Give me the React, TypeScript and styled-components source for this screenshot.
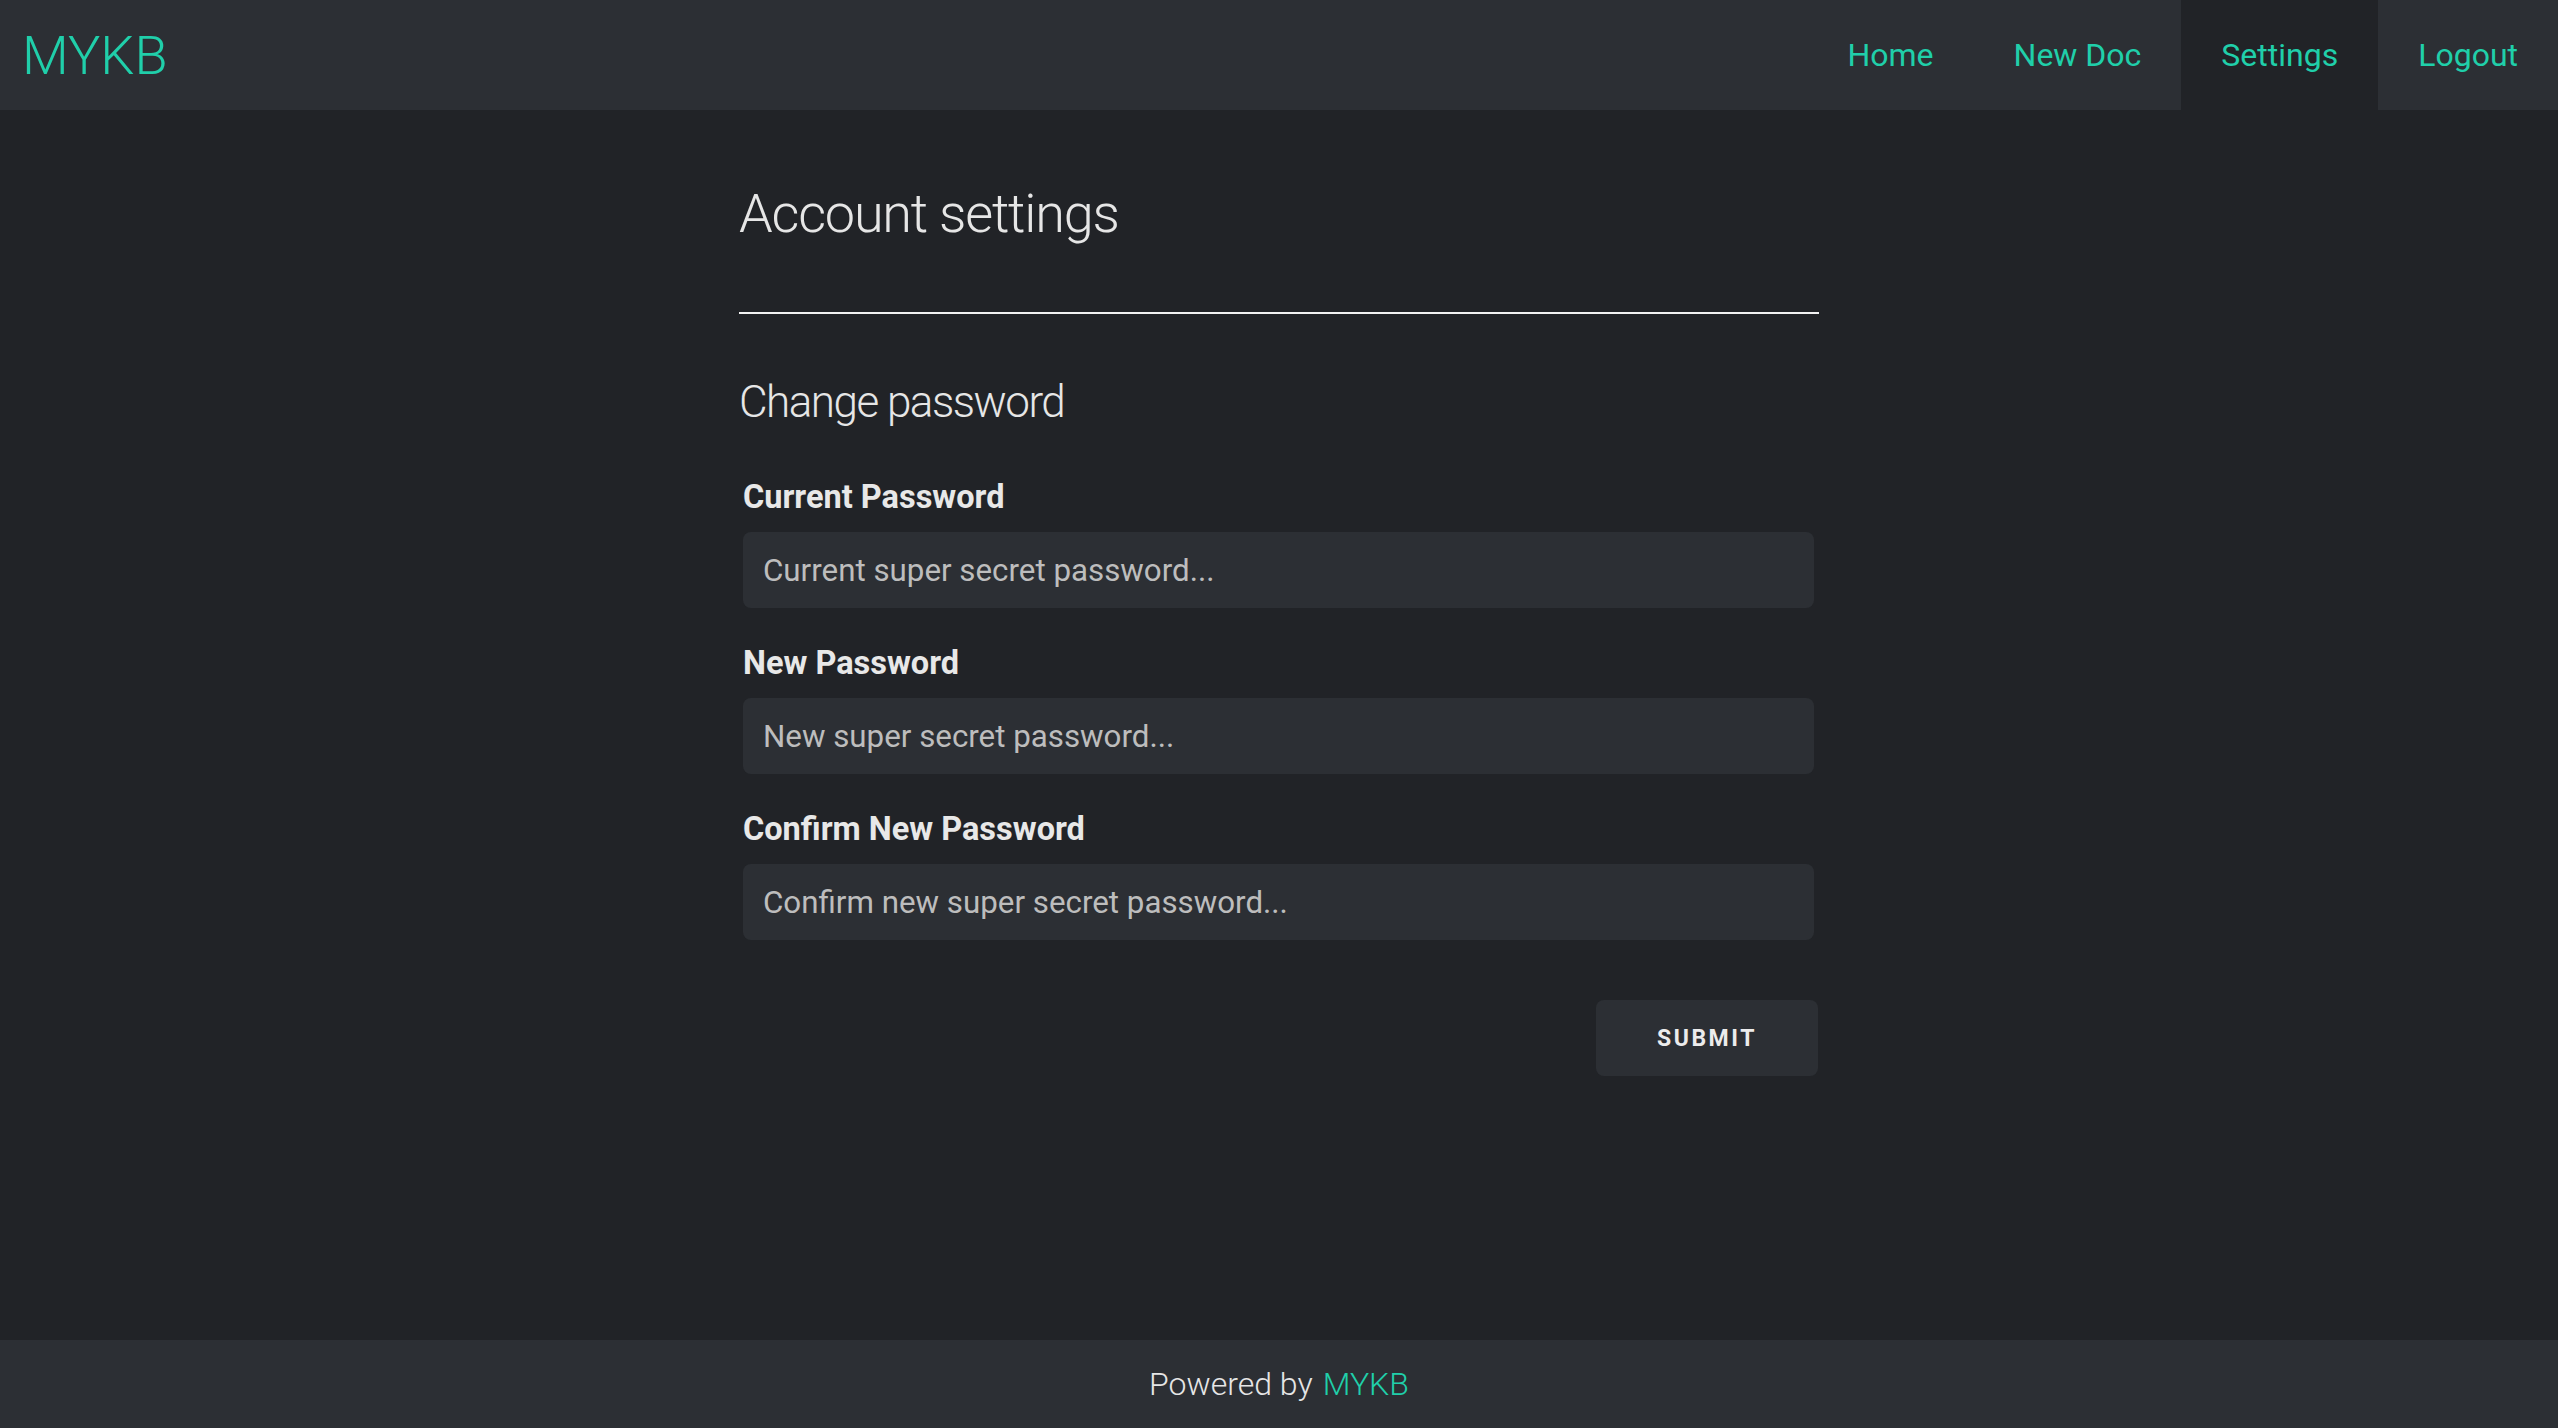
import React from "react";
import styled, { createGlobalStyle } from "styled-components";

const ACCENT = "#20cfaa";
const PANEL = "#2c2f34";
const PAGE = "#212327";
const TEXT = "#e6e6e6";

const GlobalStyle = createGlobalStyle`
  html, body {
    margin: 0;
    padding: 0;
    background: ${PAGE};
  }
  body {
    font-family: Roboto, "Noto Sans", "Liberation Sans", sans-serif;
    color: ${TEXT};
  }
  * {
    box-sizing: border-box;
  }
`;

const NAV_LINKS = [
  { label: "Home" },
  { label: "New Doc" },
  { label: "Settings", active: true },
  { label: "Logout" },
];

const FIELDS = [
  { id: "current", label: "Current Password", placeholder: "Current super secret password..." },
  { id: "new", label: "New Password", placeholder: "New super secret password..." },
  { id: "confirm", label: "Confirm New Password", placeholder: "Confirm new super secret password..." },
];

function App() {
  return (
    <>
      <GlobalStyle />
      <Page>
        <Header>
          <Logo href="#">MYKB</Logo>
          <Nav>
            {NAV_LINKS.map((link) => (
              <NavLink key={link.label} href="#" $active={link.active}>
                {link.label}
              </NavLink>
            ))}
          </Nav>
        </Header>

        <Main>
          <Column>
            <Title>Account settings</Title>
            <Divider />
            <SectionTitle>Change password</SectionTitle>
            <Form onSubmit={(e) => e.preventDefault()}>
              {FIELDS.map((field) => (
                <Field key={field.id}>
                  <Label htmlFor={field.id}>{field.label}</Label>
                  <Input id={field.id} type="password" placeholder={field.placeholder} />
                </Field>
              ))}
              <Actions>
                <SubmitButton type="submit">Submit</SubmitButton>
              </Actions>
            </Form>
          </Column>
        </Main>

        <Footer>
          Powered by <FooterBrand href="#">MYKB</FooterBrand>
        </Footer>
      </Page>
    </>
  );
}

const Page = styled.div`
  display: flex;
  flex-direction: column;
  min-height: 100vh;
`;

const Header = styled.header`
  display: flex;
  align-items: stretch;
  justify-content: space-between;
  height: 110px;
  background: ${PANEL};
`;

const Logo = styled.a`
  display: flex;
  align-items: center;
  padding-left: 22px;
  font-size: 54px;
  font-weight: 300;
  color: ${ACCENT};
  text-decoration: none;
`;

const Nav = styled.nav`
  display: flex;
  align-items: stretch;
`;

const NavLink = styled.a<{ $active?: boolean }>`
  display: flex;
  align-items: center;
  padding: 0 40px;
  font-size: 32px;
  font-weight: 400;
  color: ${ACCENT};
  text-decoration: none;
  background: ${({ $active }) => ($active ? PAGE : "transparent")};
`;

const Main = styled.main`
  flex: 1;
  display: flex;
  justify-content: center;
`;

const Column = styled.div`
  width: 1080px;
  padding-top: 72px;
`;

const Title = styled.h1`
  margin: 0;
  font-size: 54px;
  line-height: 64px;
  font-weight: 300;
  letter-spacing: -1.2px;
  color: ${TEXT};
`;

const Divider = styled.hr`
  margin: 66px 0 0;
  border: none;
  border-top: 2px solid #f2f2f2;
`;

const SectionTitle = styled.h2`
  margin: 62px 0 0;
  font-size: 44px;
  line-height: 52px;
  font-weight: 300;
  letter-spacing: -1.5px;
  color: ${TEXT};
`;

const Form = styled.form`
  display: flex;
  flex-direction: column;
  gap: 36px;
  margin-top: 50px;
`;

const Field = styled.div`
  display: flex;
  flex-direction: column;
  gap: 16px;
  padding: 0 5px 0 4px;
`;

const Label = styled.label`
  padding-left: 0;
  font-size: 32.5px;
  line-height: 38px;
  font-weight: 700;
  color: #e8e8e8;
`;

const Input = styled.input`
  height: 76px;
  padding: 0 20px;
  border: none;
  border-radius: 8px;
  outline: none;
  background: ${PANEL};
  color: ${TEXT};
  font-family: Roboto, "Noto Sans", sans-serif;
  font-size: 31.3px;

  &::placeholder {
    color: #bdbdbd;
  }
`;

const Actions = styled.div`
  display: flex;
  justify-content: flex-end;
  margin-top: 24px;
  padding-right: 1px;
`;

const SubmitButton = styled.button`
  width: 222px;
  height: 76px;
  border: none;
  border-radius: 8px;
  background: ${PANEL};
  color: #ececec;
  font-family: Roboto, "Noto Sans", sans-serif;
  font-size: 23px;
  font-weight: 700;
  letter-spacing: 2.5px;
  text-transform: uppercase;
  cursor: pointer;
`;

const Footer = styled.footer`
  display: flex;
  align-items: center;
  justify-content: center;
  gap: 10px;
  height: 88px;
  background: ${PANEL};
  font-size: 32px;
  font-weight: 300;
  color: #e6e6e6;
`;

const FooterBrand = styled.a`
  color: ${ACCENT};
  text-decoration: none;
`;

export default App;
